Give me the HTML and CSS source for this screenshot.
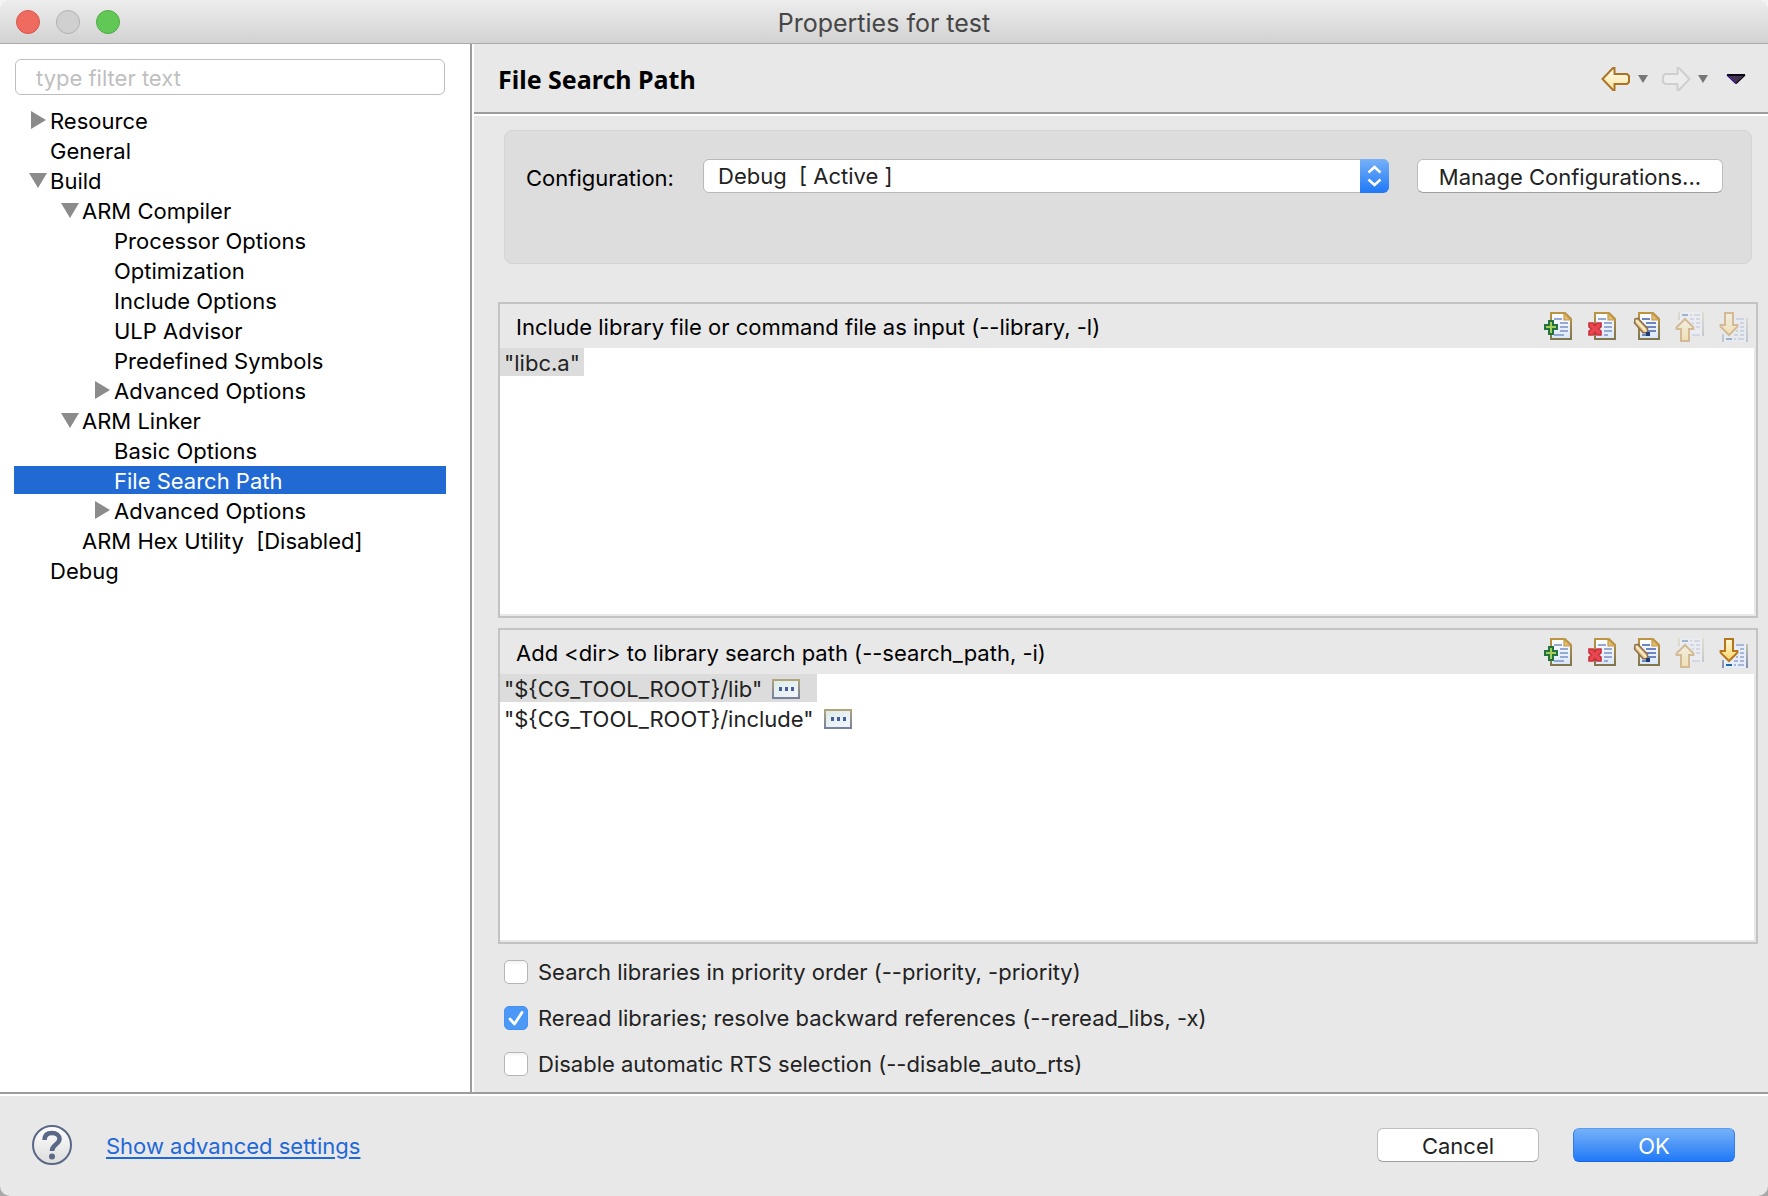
FILE: index.html
```html
<!DOCTYPE html>
<html lang="en">
<head>
<meta charset="utf-8">
<title>Properties for test</title>
<link rel="stylesheet" href="styles.css">
</head>
<body>
<svg class="defs" width="0" height="0" aria-hidden="true">
  <defs>
    <linearGradient id="gold" x1="0" y1="0" x2="0" y2="1"><stop offset="0" stop-color="#fffef4"/><stop offset="1" stop-color="#fbe29a"/></linearGradient>
    <linearGradient id="arrow" x1="0" y1="0" x2="0" y2="1"><stop offset="0" stop-color="#fff6d8"/><stop offset="1" stop-color="#fbd668"/></linearGradient>
    <linearGradient id="paper" x1="0" y1="0" x2="0" y2="1"><stop offset="0" stop-color="#ffffff"/><stop offset="1" stop-color="#d9e6fa"/></linearGradient>
    <linearGradient id="edge" x1="0" y1="0" x2="0" y2="1"><stop offset="0" stop-color="#bd9440"/><stop offset="1" stop-color="#80764e"/></linearGradient>
    <linearGradient id="side" gradientUnits="userSpaceOnUse" x1="0" y1="1" x2="0" y2="16"><stop offset="0" stop-color="#d8cfa4"/><stop offset="1" stop-color="#7f8fb0"/></linearGradient>
    <linearGradient id="chipEdge" x1="0" y1="0" x2="0" y2="1"><stop offset="0" stop-color="#b0a478"/><stop offset="1" stop-color="#7681a0"/></linearGradient>
    <linearGradient id="chipFill" x1="0" y1="0" x2="1" y2="1"><stop offset="0" stop-color="#dcebe6"/><stop offset="1" stop-color="#f4f6ff"/></linearGradient>
    <linearGradient id="glass" x1="0" y1="0" x2="0" y2="1"><stop offset="0" stop-color="#ffffff"/><stop offset="1" stop-color="#dcdcdc"/></linearGradient>
    <symbol id="doc" viewBox="0 0 16 16">
      <path d="M4.500 1.500H11.500L14.500 4.500V14.500H4.500Z" fill="url(#paper)" stroke="url(#edge)"/>
      <path d="M11 1.500V5H14.500Z" fill="#e2bd6c" stroke="#c39a4c" stroke-width=".6"/>
    </symbol>
    <symbol id="i-add" viewBox="0 0 16 16">
      <use href="#doc"/>
      <path d="M6 4.500H10M9 6.500H13M9 8.500H13M9 10.500H13M6 12.500H11" stroke="#95a9d2"/>
      <path d="M3.500 5.500H5.500V7.500H7.500V9.500H5.500V12H3.500V9.500H1.500V7.500H3.500Z" fill="#a5cf58" stroke="#22733f"/>
    </symbol>
    <symbol id="i-del" viewBox="0 0 16 16">
      <use href="#doc"/>
      <path d="M6 4.500H10M9 6.500H13M9 8.500H13M9 10.500H13M9 12.500H11" stroke="#95a9d2"/>
      <path d="M1.500 6.500H3.500L4.500 7.800L5.500 6.500H7.500V8.500L6.300 9.500L7.500 10.500V12.500H5.500L4.500 11.200L3.500 12.500H1.500V10.500L2.700 9.500L1.500 8.500V6.500Z" fill="#e8474d" stroke="#cb2e3b" stroke-width=".8"/>
    </symbol>
    <symbol id="i-edit" viewBox="0 0 16 16">
      <use href="#doc"/>
      <path d="M6 4.500H10M8 6.500H13M8 8.500H13M9 10.500H13M6 12.500H8" stroke="#6d86be"/>
      <path d="M2.500 4.500L4 4.200L8.700 9.200L8.800 11.400L6.500 11.300L2.300 6.500Z" fill="#ecc98c" stroke="#8d7250" stroke-width=".8"/>
      <path d="M3 5L8 10.500" stroke="#fff2d4" stroke-width=".8"/>
      <path d="M8 11H10V13H8Z" fill="#1d3d75"/>
    </symbol>
    <symbol id="i-up" viewBox="0 0 16 16">
      <path d="M3 1H15V13H3Z" fill="#edf2fb"/>
      <path d="M2.500 1V5M14.500 1V13" stroke="url(#side)"/>
      <path d="M4 2.500H7" stroke="#2f6da8"/>
      <path d="M8 2.500H9M10 2.500H13M8 4.500H10M11 4.500H13M9 6.500H10M11 6.500H13M11 8.500H13M9 12.500H13" stroke="#b4c0dc"/>
      <path d="M5.500 4.500L9.700 8.700V9.500H7.500V15.500H3.500V9.500H1.300V8.700Z" fill="url(#arrow)" stroke="#b5751c"/>
    </symbol>
    <symbol id="i-down" viewBox="0 0 16 16">
      <path d="M3 4H14V16H3Z" fill="#e6edfb"/>
      <path d="M2.500 12V16M14.500 4V16" stroke="url(#side)"/>
      <path d="M4 14.500H7" stroke="#1f68a8"/>
      <path d="M9 4.500H13M11 6.500H13M11 8.500H13M9 10.500H10M11 10.500H13M8 12.500H10M11 12.500H13M8 14.500H9M10 14.500H13" stroke="#aab6d6"/>
      <path d="M3.500 1.500H7.500V7.500H9.700V8.300L5.500 12.500L1.300 8.300V7.500H3.500Z" fill="url(#arrow)" stroke="#b5751c"/>
    </symbol>
    <symbol id="chip" viewBox="0 0 28 20">
      <rect x="1" y="1" width="26" height="18" fill="url(#chipFill)" stroke="url(#chipEdge)" stroke-width="2"/>
      <path d="M7 8h3v4h-3zM13 8h3v4h-3zM19 8h3v4h-3z" fill="#465f96"/>
    </symbol>
    <symbol id="closed" viewBox="0 0 20 20"><path d="M3 1V19L18 10Z" fill="#8b8b8b"/></symbol>
    <symbol id="open" viewBox="0 0 20 20"><path d="M1 3H19L10 18Z" fill="#8b8b8b"/></symbol>
  </defs>
</svg>

<div class="window">
  <header class="titlebar">
    <div class="lights">
      <button class="light close" aria-label="Close"></button>
      <button class="light minimize" aria-label="Minimize" disabled></button>
      <button class="light expand" aria-label="Zoom"></button>
    </div>
    <h1 class="window-title">Properties for test</h1>
  </header>

  <div class="body">
    <nav class="sidebar" aria-label="Property pages">
      <div class="filter-row"><input class="filter" type="text" placeholder="type filter text" aria-label="Filter"></div>
      <ul class="tree">
        <li class="row l1"><button class="toggle" aria-label="Expand Resource"><svg><use href="#closed"/></svg></button><a href="#">Resource</a></li>
        <li class="row l1 leaf"><a href="#">General</a></li>
        <li class="row l1"><button class="toggle" aria-label="Collapse Build"><svg><use href="#open"/></svg></button><a href="#">Build</a></li>
        <li class="row l2"><button class="toggle" aria-label="Collapse ARM Compiler"><svg><use href="#open"/></svg></button><a href="#">ARM Compiler</a></li>
        <li class="row l3 leaf"><a href="#">Processor Options</a></li>
        <li class="row l3 leaf"><a href="#">Optimization</a></li>
        <li class="row l3 leaf"><a href="#">Include Options</a></li>
        <li class="row l3 leaf"><a href="#">ULP Advisor</a></li>
        <li class="row l3 leaf"><a href="#">Predefined Symbols</a></li>
        <li class="row l3"><button class="toggle" aria-label="Expand Advanced Options"><svg><use href="#closed"/></svg></button><a href="#">Advanced Options</a></li>
        <li class="row l2"><button class="toggle" aria-label="Collapse ARM Linker"><svg><use href="#open"/></svg></button><a href="#">ARM Linker</a></li>
        <li class="row l3 leaf"><a href="#">Basic Options</a></li>
        <li class="row l3 leaf selected"><a href="#" aria-current="page">File Search Path</a></li>
        <li class="row l3"><button class="toggle" aria-label="Expand Advanced Options"><svg><use href="#closed"/></svg></button><a href="#">Advanced Options</a></li>
        <li class="row l2 leaf"><a href="#">ARM Hex Utility  [Disabled]</a></li>
        <li class="row l1 leaf"><a href="#">Debug</a></li>
      </ul>
    </nav>

    <main class="page">
      <div class="page-head">
        <h2 class="page-title">File Search Path</h2>
        <div class="history">
          <button class="tool" aria-label="Back">
            <svg class="icon" viewBox="0 0 32 32"><path d="M2.500 16L13 5H14.500V11H27L29 13V19L27 21H14.500V27H13Z" fill="url(#gold)" stroke="#ab7326" stroke-width="2"/></svg>
          </button>
          <button class="tool" aria-label="Back history"><svg class="mini" viewBox="0 0 10 8"><path d="M0 0H10L5 8Z" fill="#777"/></svg></button>
          <button class="tool forward" aria-label="Forward">
            <svg class="icon" viewBox="0 0 32 32"><path d="M29.500 16L19 5H17.500V11H5L3 13V19L5 21H17.500V27H19Z" fill="#ececec" stroke="#cfcfcf" stroke-width="2"/></svg>
          </button>
          <button class="tool" aria-label="Forward history"><svg class="mini" viewBox="0 0 10 8"><path d="M0 0H10L5 8Z" fill="#777"/></svg></button>
          <button class="tool menu" aria-label="View menu"><svg class="caret" viewBox="0 0 20 10"><path d="M2 1H18L10 9Z" fill="#443350"/><path d="M1 1H19" stroke="#0a0510" stroke-width="2"/><path d="M1 1L10 9.500" stroke="#2d0a78" stroke-width="1.500"/><path d="M19 1L10 9.500" stroke="#0a0510" stroke-width="1.500"/></svg></button>
        </div>
      </div>

      <div class="content">
        <section class="config">
          <label class="config-label" for="config">Configuration:</label>
          <div class="select-wrap">
            <select id="config" class="select"><option>Debug&nbsp; [ Active ]</option></select>
            <svg class="stepper" viewBox="0 0 28 34" aria-hidden="true"><path d="M8 13.500L14 8L20 13.500M8 20.500L14 26L20 20.500" fill="none" stroke="#fff" stroke-width="2.500"/></svg>
          </div>
          <button class="push manage">Manage Configurations...</button>
        </section>

        <section class="panel">
          <div class="panel-head">
            <h3 class="panel-title">Include library file or command file as input (--library, -l)</h3>
            <div class="tools">
              <button class="tool" aria-label="Add"><svg class="icon"><use href="#i-add"/></svg></button>
              <button class="tool" aria-label="Delete"><svg class="icon"><use href="#i-del"/></svg></button>
              <button class="tool" aria-label="Edit"><svg class="icon"><use href="#i-edit"/></svg></button>
              <button class="tool" aria-label="Move up" disabled><svg class="icon"><use href="#i-up"/></svg></button>
              <button class="tool" aria-label="Move down" disabled><svg class="icon"><use href="#i-down"/></svg></button>
            </div>
          </div>
          <ul class="list">
            <li class="item current">"libc.a"</li>
          </ul>
        </section>

        <section class="panel">
          <div class="panel-head">
            <h3 class="panel-title">Add &lt;dir&gt; to library search path (--search_path, -i)</h3>
            <div class="tools">
              <button class="tool" aria-label="Add"><svg class="icon"><use href="#i-add"/></svg></button>
              <button class="tool" aria-label="Delete"><svg class="icon"><use href="#i-del"/></svg></button>
              <button class="tool" aria-label="Edit"><svg class="icon"><use href="#i-edit"/></svg></button>
              <button class="tool" aria-label="Move up" disabled><svg class="icon"><use href="#i-up"/></svg></button>
              <button class="tool" aria-label="Move down"><svg class="icon"><use href="#i-down"/></svg></button>
            </div>
          </div>
          <ul class="list">
            <li class="item current has-chip">"${CG_TOOL_ROOT}/lib"<svg class="chip"><use href="#chip"/></svg></li>
            <li class="item has-chip">"${CG_TOOL_ROOT}/include"<svg class="chip"><use href="#chip"/></svg></li>
          </ul>
        </section>

        <div class="options">
          <label class="option"><input class="check" type="checkbox">Search libraries in priority order (--priority, -priority)</label>
          <label class="option"><span class="check-wrap"><input class="check" type="checkbox" checked><svg class="tick" viewBox="0 0 24 24"><path d="M6 13L10.500 18L18 6.500" fill="none" stroke="#fff" stroke-width="2.800" stroke-linecap="round" stroke-linejoin="round"/></svg></span>Reread libraries; resolve backward references (--reread_libs, -x)</label>
          <label class="option"><input class="check" type="checkbox">Disable automatic RTS selection (--disable_auto_rts)</label>
        </div>
      </div>
    </main>
  </div>

  <footer class="footer">
    <button class="help" aria-label="Help">
      <svg viewBox="0 0 40 40" width="40" height="40"><circle cx="20" cy="20" r="19" fill="url(#glass)" stroke="#5a6785" stroke-width="2"/><path d="M12.500 15C12.500 10 15.500 8 20 8C24.500 8 27.500 10.500 27.500 14C27.500 19.500 20 19 20 26" fill="none" stroke="#5a6785" stroke-width="4.500"/><circle cx="20" cy="31.500" r="3" fill="#5a6785"/></svg>
    </button>
    <a class="advanced" href="#">Show advanced settings</a>
    <div class="actions">
      <button class="push">Cancel</button>
      <button class="push primary">OK</button>
    </div>
  </footer>
</div>
</body>
</html>
```

FILE: styles.css
```css
* { box-sizing: border-box; }

html { background: linear-gradient(#f4f4f4 50%, #a8a8a8 50%); }

body {
  margin: 0;
  font-family: Inter, "Liberation Sans", sans-serif;
  font-size: 22px;
  line-height: 28px;
  color: #000;
}

h1, h2, h3, ul { margin: 0; padding: 0; font: inherit; }
ul { list-style: none; }
button, input, select { font: inherit; color: inherit; margin: 0; }
button { padding: 0; border: 0; background: none; }
svg { display: block; }
.defs { position: absolute; }

.window {
  display: flex;
  flex-direction: column;
  min-height: 100vh;
  background: #e8e8e8;
  border-radius: 10px;
  overflow: hidden;
}

/* Title bar */
.titlebar {
  display: grid;
  grid-template-columns: 1fr auto 1fr;
  align-items: center;
  height: 44px;
  padding: 0 16px;
  background: linear-gradient(#ededed, #d2d2d2);
  border-bottom: 1px solid #ababab;
}
.lights { display: flex; gap: 16px; }
.light { width: 24px; height: 24px; border: 1px solid; border-radius: 50%; }
.close { background: #ef6a5f; border-color: #d9564c; }
.minimize { background: #d0d0d0; border-color: #b0b0b0; }
.expand { background: #61c856; border-color: #50ab44; }
.window-title { padding-top: 2px; font-size: 25px; color: #464646; }

/* Two columns */
.body { display: flex; flex: 1; }
.sidebar {
  flex: none;
  width: 472px;
  padding: 15px 24px 15px 14px;
  background: #fff;
  border-right: 2px solid #9c9c9c;
}
.filter-row { padding: 0 1px; }
.filter {
  display: block;
  width: 100%;
  height: 36px;
  padding: 2px 20px 0;
  border: 1px solid #bdbdbd;
  border-radius: 6px;
  background: #fff;
}
.filter::placeholder { color: #bfbfbf; opacity: 1; }

.tree { display: flex; flex-direction: column; gap: 2px; margin-top: 11px; }
.row { display: flex; align-items: center; gap: 2px; height: 28px; white-space: pre; }
.row a { padding-top: 2px; color: inherit; text-decoration: none; }
.toggle svg { width: 20px; height: 20px; }
.l1 { padding-left: 14px; }
.l2 { padding-left: 46px; }
.l3 { padding-left: 78px; }
.leaf::before { content: ""; width: 20px; }
.selected { background: #216ad3; color: #fff; }

.page {
  display: flex;
  flex-direction: column;
  flex: 1;
  min-width: 0;
  border-left: 2px solid #fff;
}
.page-head {
  display: flex;
  align-items: center;
  justify-content: space-between;
  height: 72px;
  padding: 0 22px 0 24px;
  border-bottom: 2px solid #fff;
  box-shadow: inset 0 -2px #9c9c9c;
}
.page-title { font-family: "Noto Sans", "Open Sans", sans-serif; font-size: 25px; font-weight: 700; }
.history { display: flex; align-items: center; gap: 6px; }
.forward { margin-left: 6px; }
.menu { margin-left: 12px; }
.icon { width: 32px; height: 32px; }
.mini { width: 10px; height: 8px; }
.caret { width: 20px; height: 10px; }
.tool:disabled { opacity: .4; }

.content { display: flex; flex-direction: column; flex: 1; padding: 14px 10px 14px 24px; }

.config {
  display: flex;
  align-items: flex-start;
  height: 134px;
  margin: 0 6px 38px;
  padding: 28px 28px 0 21px;
  background: #ddd;
  border: 1px solid #d4d4d4;
  border-radius: 8px;
}
.config-label { width: 177px; padding-top: 5px; }
.select-wrap { position: relative; flex: 1; margin-right: 28px; }
.select {
  appearance: none;
  display: block;
  width: 100%;
  height: 34px;
  padding: 0 40px 0 14px;
  border: 1px solid #b8b8b8;
  border-radius: 6px;
  background: #fff;
  color: #222;
}
.stepper {
  position: absolute;
  top: 0;
  right: 0;
  width: 29px;
  height: 34px;
  border-radius: 0 6px 6px 0;
  background: linear-gradient(#76b1f8, #1f78f6);
  pointer-events: none;
}
.push {
  width: 162px;
  height: 34px;
  padding-top: 1px;
  border: 1px solid #bdbdbd;
  border-bottom-color: #9f9f9f;
  border-radius: 6px;
  background: #fff;
  color: #222;
}
.manage { width: 306px; }
.primary { border-color: #5a9cf2 #2f7df0 #1565e8; background: linear-gradient(#76b1f8, #2179f7); color: #fff; }

/* Option lists */
.panel {
  display: flex;
  flex-direction: column;
  flex: 1;
  min-height: 160px;
  border: 2px solid #c3c3c3;
  padding: 0 2px 2px 0;
}
.panel + .panel { margin-top: 10px; }
.panel-head {
  display: flex;
  align-items: center;
  justify-content: space-between;
  height: 44px;
  padding: 0 4px 0 16px;
}
.panel-title { padding-top: 2px; }
.tools { display: flex; gap: 12px; }
.list {
  display: flex;
  flex-direction: column;
  align-items: flex-start;
  flex: 1;
  gap: 2px;
  background: #fff;
  color: #222;
}
.item { display: flex; align-items: center; gap: 10px; height: 28px; padding: 1px 4px 0; }
.has-chip { padding-right: 17px; }
.current { background: #dcdcdc; }
.chip { width: 28px; height: 20px; }

.options { display: flex; flex-direction: column; gap: 18px; margin-top: 14px; padding-left: 6px; color: #222; }
.option { display: flex; align-items: center; gap: 10px; align-self: flex-start; }
.check-wrap { position: relative; }
.check {
  appearance: none;
  display: block;
  width: 24px;
  height: 24px;
  border: 1px solid #b5b5b5;
  border-radius: 5px;
  background: linear-gradient(#f1f1f1, #fff 20%);
}
.check:checked { border-color: #4592f3; background: #4c98f7; }
.tick { position: absolute; inset: 0; width: 24px; height: 24px; pointer-events: none; }
.check:not(:checked) + .tick { display: none; }

/* Footer */
.footer {
  display: flex;
  align-items: center;
  height: 104px;
  padding: 0 33px 0 32px;
  border-top: 2px solid #9c9c9c;
  box-shadow: inset 0 2px #fff;
}
.advanced { margin-left: 34px; padding-top: 1px; color: #1f68d8; text-underline-offset: 3px; text-decoration-thickness: 2px; }
.actions { display: flex; gap: 34px; margin-left: auto; }
```
